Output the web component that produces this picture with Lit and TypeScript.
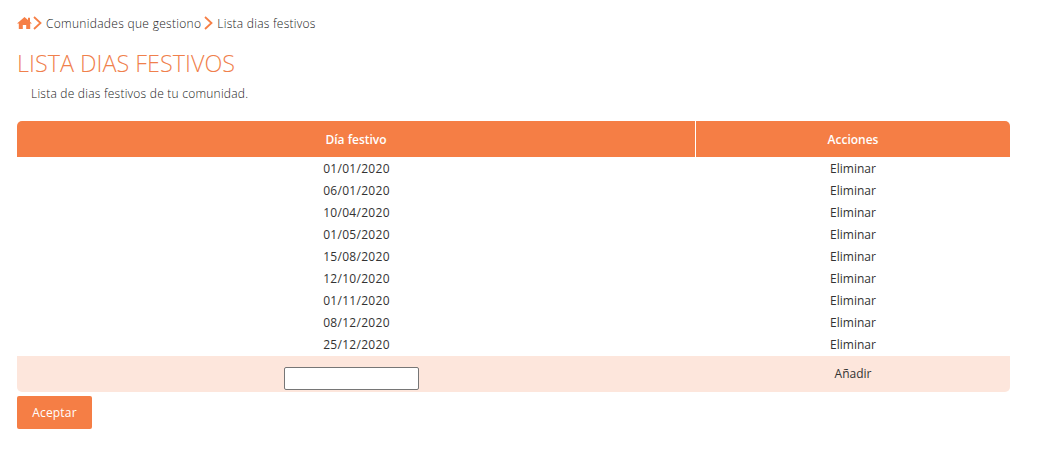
import { LitElement, html, css, svg } from "lit";
import { customElement } from "lit/decorators.js";

const DATES = ["01/01/2020","06/01/2020","10/04/2020","01/05/2020","15/08/2020","12/10/2020","01/11/2020","08/12/2020","25/12/2020"];
const chevron = svg`<path d="M1 1 L7.5 7 L1 13" fill="none" stroke="#f67f46" stroke-width="1.8"/>`;

@customElement("app-root")
export class AppRoot extends LitElement {
  static styles = css`
    :host { display: block; width: 1038px; height: 454px; background: #fff; box-sizing: border-box; padding: 14px 28px 0 17px; font-family: "Open Sans", sans-serif; font-size: 12px; color: #333; }
    .crumbs { display: flex; align-items: center; height: 18px; font-weight: 300; color: #222; }
    .crumbs svg { display: block; }
    .home { margin-right: 1px; }
    .t1 { margin-left: 4px; margin-right: 3px; letter-spacing: .3px; }
    .t2 { margin-left: 4px; letter-spacing: .25px; }
    h1 { margin: 15px 0 0; font-size: 23.4px; line-height: 32px; font-weight: 300; color: #f0804c; }
    .sub { margin: 7px 0 0 14px; line-height: 16px; font-size: 12px; font-weight: 300; letter-spacing: .23px; color: #222; }
    .grid { margin-top: 19px; display: grid; grid-template-columns: 679px 314px; }
    .th { background: #f57e45; color: #fff; font-weight: 600; height: 36px; display: flex; align-items: center; justify-content: center; }
    .th.a { border-radius: 5px 0 0 0; border-right: 1px solid #fff; }
    .th.b { border-radius: 0 5px 0 0; }
    .c { height: 22px; display: flex; align-items: center; justify-content: center; }
    .date { letter-spacing: .3px; }
    .add { background: #fde6dc; height: 36px; margin-top: 1px; display: flex; justify-content: center; box-sizing: border-box; }
    .add.a { border-radius: 0 0 0 5px; align-items: flex-end; padding: 0 10px 2px 0; }
    .add.b { border-radius: 0 0 5px 0; align-items: center; padding-bottom: 2px; }
    input { width: 135px; height: 23px; box-sizing: border-box; border: 1px solid #767676; border-radius: 2px; background: #fff; padding: 0; margin: 0; }
    button { display: block; margin-top: 4px; width: 75px; height: 33px; border: 0; border-radius: 2px; background: #f57e45; color: #fff; font: 12px "Open Sans", sans-serif; letter-spacing: .2px; padding: 0; }
  `;
  render() {
    return html`
      <div class="crumbs">
        <svg class="home" width="15" height="14" viewBox="0 0 15 14"><path d="M7.5 1 L11 4 V1.8 H13 V5.8 L15 7.6 L13.2 7.6 L13.2 13 L9.2 13 L9.2 9 L5.8 9 L5.8 13 L1.8 13 L1.8 7.6 L0 7.6 Z" fill="#f67f46"/></svg>
        <svg width="9" height="14" viewBox="0 0 9 14">${chevron}</svg>
        <span class="t1">Comunidades que gestiono</span>
        <svg width="9" height="14" viewBox="0 0 9 14">${chevron}</svg>
        <span class="t2">Lista dias festivos</span>
      </div>
      <h1>LISTA DIAS FESTIVOS</h1>
      <p class="sub">Lista de dias festivos de tu comunidad.</p>
      <div class="grid">
        <div class="th a">Día festivo</div><div class="th b">Acciones</div>
        ${DATES.map((d) => html`<div class="c date">${d}</div><div class="c">Eliminar</div>`)}
        <div class="add a"><input type="text" /></div><div class="add b">Añadir</div>
      </div>
      <button>Aceptar</button>
    `;
  }
}
